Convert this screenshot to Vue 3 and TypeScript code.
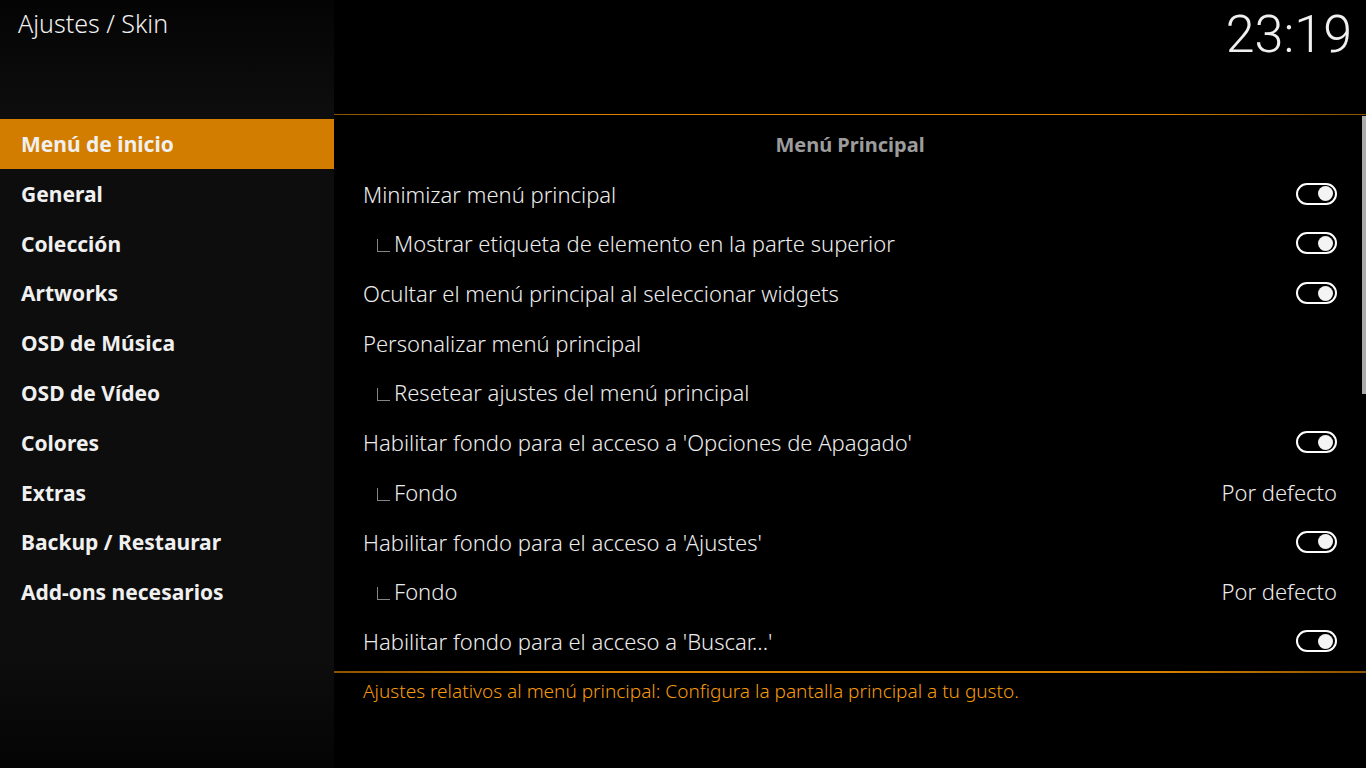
<script setup lang="ts">
import { ref } from 'vue'

interface Setting {
  label: string
  nested?: boolean
  kind: 'toggle' | 'action' | 'value'
  on?: boolean
}

const categories: string[] = [
  'Menú de inicio',
  'General',
  'Colección',
  'Artworks',
  'OSD de Música',
  'OSD de Vídeo',
  'Colores',
  'Extras',
  'Backup / Restaurar',
  'Add-ons necesarios',
]
const selected = ref(0)

const settings = ref<Setting[]>([
  { label: 'Minimizar menú principal', kind: 'toggle', on: true },
  { label: 'Mostrar etiqueta de elemento en la parte superior', nested: true, kind: 'toggle', on: true },
  { label: 'Ocultar el menú principal al seleccionar widgets', kind: 'toggle', on: true },
  { label: 'Personalizar menú principal', kind: 'action' },
  { label: 'Resetear ajustes del menú principal', nested: true, kind: 'action' },
  { label: "Habilitar fondo para el acceso a 'Opciones de Apagado'", kind: 'toggle', on: true },
  { label: 'Fondo', nested: true, kind: 'value' },
  { label: "Habilitar fondo para el acceso a 'Ajustes'", kind: 'toggle', on: true },
  { label: 'Fondo', nested: true, kind: 'value' },
  { label: "Habilitar fondo para el acceso a 'Buscar...'", kind: 'toggle', on: true },
])
</script>

<template>
  <div class="screen">
    <aside class="sidebar">
      <h1 class="title">Ajustes / Skin</h1>
      <nav class="categories">
        <button
          v-for="(name, i) in categories"
          :key="name"
          type="button"
          class="category"
          :class="{ active: i === selected }"
          @click="selected = i"
        >{{ name }}</button>
      </nav>
    </aside>

    <main class="content">
      <header class="top"><time class="clock">23:19</time></header>
      <section class="panel">
        <div class="rows">
          <h2 class="heading">Menú Principal</h2>
          <template v-for="(s, i) in settings" :key="i">
            <label v-if="s.kind === 'toggle'" class="row" :class="{ nested: s.nested }">
              <span class="text">{{ s.label }}</span>
              <input v-model="s.on" type="checkbox" class="switch" />
            </label>
            <button v-else type="button" class="row" :class="{ nested: s.nested }">
              <span class="text">{{ s.label }}</span>
              <span v-if="s.kind === 'value'">Por defecto</span>
            </button>
          </template>
        </div>
        <div class="track"><div class="thumb"></div></div>
      </section>
      <footer class="hint">Ajustes relativos al menú principal: Configura la pantalla principal a tu gusto.</footer>
    </main>
  </div>
</template>

<style>
body {
  background: #000;
}
</style>

<style scoped>
.screen {
  display: grid;
  grid-template-columns: 334px 1fr;
  height: 100vh;
  background: #000;
  color: #f0f0f0;
  font-family: 'Noto Sans', sans-serif;
  overflow: hidden;
}
.sidebar,
.content {
  display: grid;
  grid-template-rows: 114px 1fr 95px;
  min-width: 0;
}
.sidebar {
  background: linear-gradient(#040404, #0d0d0d 110px, #0d0d0d 660px, #040404);
}
.title {
  margin: 0;
  padding: 5px 18px;
  font-size: 25px;
  line-height: 36px;
  font-weight: 300;
}
.categories,
.rows {
  display: grid;
  grid-template-rows: repeat(11, 1fr);
  min-width: 0;
}
.categories {
  padding: 5px 0 6px;
}
.rows {
  flex: 1;
  padding: 5px 25px 4px 29px;
}
.category {
  border: 0;
  padding: 0 21px;
  background: none;
  color: inherit;
  font: 700 21px/28px 'Noto Sans', sans-serif;
  text-align: left;
}
.category.active {
  background: #d27d00;
}
.top {
  display: flex;
  justify-content: flex-end;
  padding: 5px 14px;
}
.clock {
  font: 300 52px/60px Roboto, sans-serif;
}
.panel {
  display: flex;
  border-style: solid;
  border-width: 1px 0 2px;
  border-image: linear-gradient(90deg, #8a5200, #d98200 20%, #d98200 80%, #8a5200) 1;
}
.heading {
  align-self: center;
  margin: 0;
  color: #9c9c9c;
  font-size: 20px;
  line-height: 28px;
  text-align: center;
}
.row {
  display: flex;
  align-items: center;
  border: 0;
  padding: 0 0 2px;
  background: none;
  color: #ececec;
  font: 300 22px/28px 'Noto Sans', sans-serif;
  text-align: left;
}
.text {
  flex: 1;
}
.nested::before {
  content: '';
  width: 12px;
  height: 12px;
  margin: 5px 4px 0 14px;
  border: solid #858585;
  border-width: 0 0 1px 1px;
}
.switch {
  appearance: none;
  display: flex;
  align-items: center;
  box-sizing: border-box;
  width: 41px;
  height: 22px;
  margin: 0;
  padding: 0 2px;
  border: 2px solid #fff;
  border-radius: 11px;
}
.switch::before {
  content: '';
  width: 15px;
  height: 15px;
  border-radius: 50%;
  background: #f4f4f4;
}
.switch:checked::before {
  margin-left: auto;
}
.track {
  width: 4px;
  padding-top: 1px;
}
.thumb {
  height: 50%;
  background: #aaa;
}
.hint {
  padding: 6px 29px;
  color: #f79a0d;
  font-size: 19px;
  line-height: 24px;
  font-weight: 300;
}
</style>
